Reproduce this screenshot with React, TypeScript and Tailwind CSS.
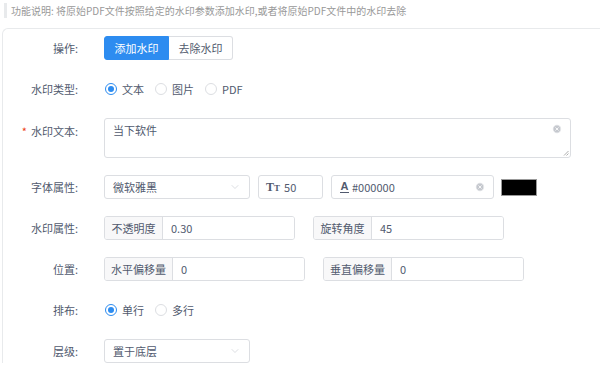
import { ChevronDown, XCircle } from 'lucide-react';

const font = { fontFamily: '"Noto Sans CJK SC", "Noto Sans", sans-serif' };

function Label({ children, required }: { children: React.ReactNode; required?: boolean }) {
  return (
    <div className="w-[76px] shrink-0 pr-[1px] text-right text-[11px] text-[#515a6e]">
      {required && <span className="mr-[4px] text-[#ed4014]">*</span>}
      {children}
    </div>
  );
}

function Radio({ checked, label }: { checked?: boolean; label: string }) {
  return (
    <label className="flex items-center gap-[5px] text-[11px] text-[#515a6e]">
      <span
        className={`flex h-[12px] w-[12px] items-center justify-center rounded-full border bg-white ${
          checked ? 'border-[#2d8cf0]' : 'border-[#dcdee2]'
        }`}
      >
        {checked && <span className="h-[6px] w-[6px] rounded-full bg-[#2d8cf0]" />}
      </span>
      {label}
    </label>
  );
}

function Select({ value }: { value: string }) {
  return (
    <div className="flex h-[24px] w-[146px] items-center justify-between rounded-[3px] border border-[#dcdee2] bg-white pl-[8px] pr-[8px] text-[11px] text-[#515a6e]">
      <span>{value}</span>
      <ChevronDown size={12} strokeWidth={1.2} className="text-[#c5c8ce]" />
    </div>
  );
}

function AddonInput({ addon, value, width, addonWidth }: { addon: string; value: string; width: string; addonWidth: string }) {
  return (
    <div className={`flex h-[24px] ${width} overflow-hidden rounded-[3px] border border-[#dcdee2] text-[11px] text-[#515a6e]`}>
      <div className={`flex ${addonWidth} shrink-0 items-center justify-center border-r border-[#dcdee2] bg-[#f8f8f9]`}>{addon}</div>
      <div className="flex flex-1 items-center bg-white pl-[8px]">{value}</div>
    </div>
  );
}

export default function App() {
  return (
    <div className="h-[376px] w-[600px] overflow-hidden bg-white" style={font}>
      <div className="flex h-[28px] items-start pt-[3px] pl-[4px]">
        <div className="flex h-[15px] items-center border-l-[3px] border-[#e8eaec] pl-[4px] text-[10px] text-[#999]">
          功能说明: 将原始PDF文件按照给定的水印参数添加水印,或者将原始PDF文件中的水印去除
        </div>
      </div>

      <div className="ml-[2px] w-[640px] rounded-tl-[6px] border-l border-t border-[#e8eaec] pt-[7px]">
        <div className="flex flex-col gap-[17px]">
          <div className="flex items-center">
            <Label>操作:</Label>
            <div className="ml-[25px] flex h-[24px] text-[11px]">
              <button className="flex w-[65px] items-center justify-center rounded-l-[3px] border border-[#2d8cf0] bg-[#2d8cf0] text-white">
                添加水印
              </button>
              <button className="flex w-[64px] items-center justify-center rounded-r-[3px] border border-l-0 border-[#dcdee2] bg-white text-[#515a6e]">
                去除水印
              </button>
            </div>
          </div>

          <div className="flex h-[24px] items-center">
            <Label>水印类型:</Label>
            <div className="ml-[26px] flex items-center gap-[11px]">
              <Radio checked label="文本" />
              <Radio label="图片" />
              <Radio label="PDF" />
            </div>
          </div>

          <div className="flex items-start">
            <div className="pt-[5px]">
              <Label required>水印文本:</Label>
            </div>
            <div className="relative ml-[25px] h-[40px] w-[467px] rounded-[3px] border border-[#dcdee2] bg-white px-[8px] pt-[3px] text-[11px] text-[#515a6e]">
              当下软件
              <XCircle size={10} fill="#c5c8ce" strokeWidth={2} className="absolute right-[8px] top-[5px] text-white" />
              <svg className="absolute bottom-[1px] right-[1px]" width="6" height="6" viewBox="0 0 6 6">
                <path d="M5.5 1 L1 5.5 M5.5 3.5 L3.5 5.5" stroke="#999" strokeWidth="0.8" />
              </svg>
            </div>
          </div>

          <div className="flex h-[24px] items-center">
            <Label>字体属性:</Label>
            <div className="ml-[25px] flex items-center">
              <Select value="微软雅黑" />
              <div className="ml-[8px] flex h-[24px] w-[65px] items-center rounded-[3px] border border-[#dcdee2] bg-white pl-[7px] text-[11px] text-[#515a6e]">
                <span className="mr-[4px] font-semibold leading-none" style={{ fontFamily: '"Liberation Serif", serif' }}>
                  <span className="text-[12px]">T</span>
                  <span className="text-[9px]">T</span>
                </span>
                50
              </div>
              <div className="ml-[8px] flex h-[24px] w-[163px] items-center rounded-[3px] border border-[#dcdee2] bg-white pl-[8px] pr-[8px] text-[11px] text-[#515a6e]">
                <span className="mr-[3px] flex flex-col items-center leading-none">
                  <span className="text-[11px] font-bold leading-[10px]" style={{ fontFamily: '"Liberation Sans", sans-serif' }}>A</span>
                  <span className="mt-[1px] h-[1.5px] w-[9px] bg-[#515a6e]" />
                </span>
                <span className="flex-1">#000000</span>
                <XCircle size={10} fill="#c5c8ce" strokeWidth={2} className="text-white" />
              </div>
              <div className="ml-[7px] h-[17px] w-[36px] border border-[#999] bg-black" />
            </div>
          </div>

          <div className="flex h-[24px] items-center">
            <Label>水印属性:</Label>
            <div className="ml-[25px] flex items-center gap-[18px]">
              <AddonInput addon="不透明度" value="0.30" width="w-[191px]" addonWidth="w-[58px]" />
              <AddonInput addon="旋转角度" value="45" width="w-[191px]" addonWidth="w-[58px]" />
            </div>
          </div>

          <div className="flex h-[24px] items-center">
            <Label>位置:</Label>
            <div className="ml-[25px] flex items-center gap-[18px]">
              <AddonInput addon="水平偏移量" value="0" width="w-[201px]" addonWidth="w-[68px]" />
              <AddonInput addon="垂直偏移量" value="0" width="w-[201px]" addonWidth="w-[68px]" />
            </div>
          </div>

          <div className="flex h-[24px] items-center">
            <Label>排布:</Label>
            <div className="ml-[26px] flex items-center gap-[11px]">
              <Radio checked label="单行" />
              <Radio label="多行" />
            </div>
          </div>

          <div className="flex h-[24px] items-center">
            <Label>层级:</Label>
            <div className="ml-[25px]">
              <Select value="置于底层" />
            </div>
          </div>
        </div>
      </div>
    </div>
  );
}
